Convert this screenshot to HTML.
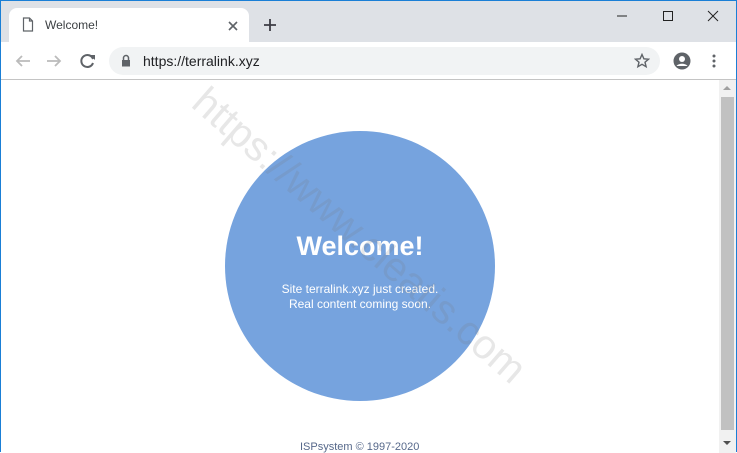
<!DOCTYPE html><html><head><style>
body{margin:0;width:737px;height:453px;overflow:hidden;font-family:"Liberation Sans",sans-serif;background:#fff;position:relative}
.frame{position:absolute;left:0;top:0;width:735px;height:451px;border:1px solid #1a7fd6;border-bottom:none}
.tabs{position:absolute;left:1px;top:1px;width:735px;height:41px;background:#dee1e6}
.tab{position:absolute;left:9px;top:8px;width:240px;height:34px;background:#fff;border-radius:8px 8px 0 0}
.tool{position:absolute;left:1px;top:42px;width:735px;height:37px;background:#fff;border-bottom:1px solid #c4c4c4}
.omni{position:absolute;left:109px;top:47px;width:551px;height:28px;background:#f1f3f4;border-radius:14px}
.sb{position:absolute;left:719px;top:80px;width:17px;height:373px;background:#f1f1f1}
.thumb{position:absolute;left:721px;top:97px;width:13px;height:333px;background:#c1c1c1}
.circle{position:absolute;left:225px;top:131px;width:270px;height:270px;border-radius:50%;background:#76a3de;color:#fff;text-align:center}
</style></head><body>
<div class="tabs"></div><div class="tab"></div>
<svg style="position:absolute;left:22px;top:17px" width="12" height="15"><path d="M1.5 1h6l3 3v10h-9z M7.5 1v3h3" fill="none" stroke="#5f6368" stroke-width="1.2"/></svg>
<div style="position:absolute;left:45px;top:18px;font-size:12px;color:#3c4043">Welcome!</div>
<svg style="position:absolute;left:228px;top:21px" width="10" height="10"><path d="M1 1L9 9M9 1L1 9" stroke="#5f6368" stroke-width="1.6"/></svg>
<svg style="position:absolute;left:263px;top:18px" width="14" height="14"><path d="M7 1v12M1 7h12" stroke="#3c3c44" stroke-width="1.8"/></svg>
<svg style="position:absolute;left:615px;top:10px" width="110" height="12"><path d="M2 6h10" stroke="#222" stroke-width="1"/><rect x="48.5" y="1.5" width="9" height="9" fill="none" stroke="#222"/><path d="M93 1l10 10M103 1L93 11" stroke="#222"/></svg>
<div class="tool"></div><div class="omni"></div>
<svg style="position:absolute;left:14px;top:53px" width="84" height="16"><path d="M16 8H3M8 3L3 8l5 5" fill="none" stroke="#bbb" stroke-width="1.8"/><path d="M33 8h13M41 3l5 5-5 5" fill="none" stroke="#bbb" stroke-width="1.8"/><path d="M79 6A6 6 0 1 0 79 10" fill="none" stroke="#5f6368" stroke-width="2"/><path d="M76 2h5v5z" fill="#5f6368"/></svg>
<svg style="position:absolute;left:121px;top:54px" width="10" height="13"><path d="M2.5 6V4a2.5 2.5 0 0 1 5 0v2" fill="none" stroke="#5f6368" stroke-width="1.5"/><rect x="1" y="6" width="8" height="6.5" fill="#5f6368"/></svg>
<div style="position:absolute;left:143px;top:53px;font-size:14px;color:#202124">https://terralink.xyz</div>
<svg style="position:absolute;left:634px;top:53px" width="16" height="16"><path d="M8 1.5l1.9 4.3 4.6.4-3.5 3 1.1 4.5L8 11.3 3.9 13.7 5 9.2 1.5 6.2l4.6-.4z" fill="none" stroke="#5f6368" stroke-width="1.4"/></svg>
<svg style="position:absolute;left:673px;top:52px" width="18" height="18"><circle cx="9" cy="9" r="8.5" fill="#5f6368"/><circle cx="9" cy="7" r="3" fill="#fff"/><path d="M3.5 14c2-3 9-3 11 0" fill="#fff"/></svg>
<svg style="position:absolute;left:712px;top:54px" width="4" height="14"><circle cx="2" cy="2" r="1.5" fill="#5f6368"/><circle cx="2" cy="7" r="1.5" fill="#5f6368"/><circle cx="2" cy="12" r="1.5" fill="#5f6368"/></svg>
<div class="circle"><div style="font-size:27px;font-weight:bold;margin-top:100px">Welcome!</div><div style="font-size:12px;margin-top:20px;line-height:15px">Site terralink.xyz just created.<br>Real content coming soon.</div></div>
<div style="position:absolute;left:214px;top:78px;transform:rotate(41deg);font-size:41px;color:rgba(120,120,120,0.18);white-space:nowrap;transform-origin:left top">https://www.cleatis.com</div>
<div style="position:absolute;left:300px;top:441px;font-size:11px;color:#56688a">ISPsystem © 1997-2020</div>
<div class="sb"></div><div class="thumb"></div>
<svg style="position:absolute;left:723px;top:85px" width="9" height="6"><path d="M0 5h8L4 1z" fill="#a0a0a0"/></svg>
<svg style="position:absolute;left:723px;top:440px" width="9" height="6"><path d="M0 1h8L4 5z" fill="#505050"/></svg>
<div class="frame"></div>
</body></html>
